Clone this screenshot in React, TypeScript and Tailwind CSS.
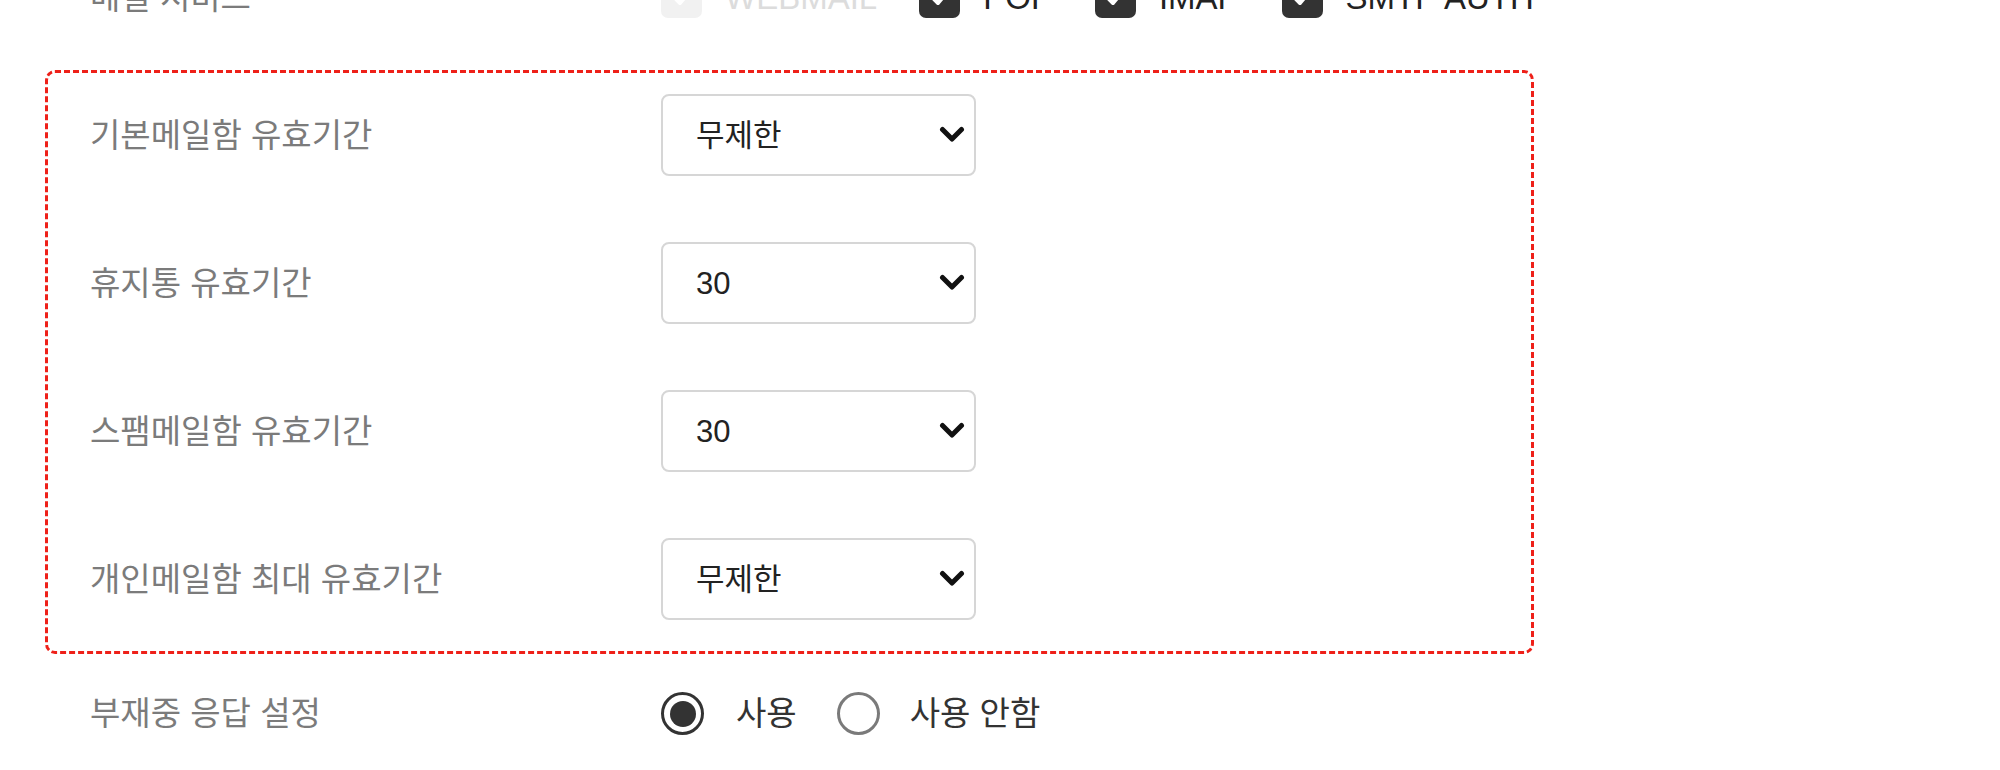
import React from "react";

const labelCls =
  "w-[571px] shrink-0 text-[33px] leading-none text-[#7b7b7b] font-['Liberation_Sans','Noto_Sans_CJK_KR',sans-serif]";

function Check({ disabled }: { disabled?: boolean }) {
  return (
    <div
      className={
        "w-[41px] h-[41px] rounded-[7px] flex items-center justify-center shrink-0 " +
        (disabled ? "bg-[#f1f1f1]" : "bg-[#333333]")
      }
    >
      <svg width="26" height="26" viewBox="0 0 26 26">
        <path
          d="M5 13 L11 19 L21 7"
          fill="none"
          stroke="#ffffff"
          strokeWidth="4"
          strokeLinecap="round"
          strokeLinejoin="round"
        />
      </svg>
    </div>
  );
}

function CheckItem({ label, disabled }: { label: string; disabled?: boolean }) {
  return (
    <div className="flex items-center gap-[23px]">
      <Check disabled={disabled} />
      <span
        className={
          "text-[33px] leading-none " + (disabled ? "text-[#dcdcdc]" : "text-[#222222]")
        }
      >
        {label}
      </span>
    </div>
  );
}

function SelectBox({ value }: { value: string }) {
  return (
    <div className="w-[315px] h-[82px] rounded-[8px] border-2 border-[#d6d6d6] bg-white flex items-center justify-between pl-[33px] pr-[9px]">
      <span className="text-[31px] leading-none text-[#222222]">{value}</span>
      <svg width="26" height="18" viewBox="0 0 26 18">
        <path
          d="M3.5 3.5 L13 13 L22.5 3.5"
          fill="none"
          stroke="#111111"
          strokeWidth="5"
          strokeLinecap="round"
          strokeLinejoin="round"
        />
      </svg>
    </div>
  );
}

function SelectRow({ label, value }: { label: string; value: string }) {
  return (
    <div className="flex items-center h-[82px]">
      <div className={labelCls}>{label}</div>
      <SelectBox value={value} />
    </div>
  );
}

function Radio({ checked }: { checked?: boolean }) {
  return checked ? (
    <div className="w-[43px] h-[43px] rounded-full border-[3px] border-[#333333] flex items-center justify-center shrink-0">
      <div className="w-[26px] h-[26px] rounded-full bg-[#333333]" />
    </div>
  ) : (
    <div className="w-[43px] h-[43px] rounded-full border-[3px] border-[#7a7a7a] shrink-0" />
  );
}

export default function App() {
  return (
    <div className="w-[2000px] h-[770px] overflow-hidden bg-white font-['Liberation_Sans','Noto_Sans_CJK_KR',sans-serif]">
      <div className="mt-[-27px]">
        <div className="flex items-center h-[48px] pl-[90px]">
          <div className={labelCls}>메일 서비스</div>
          <div className="flex items-center gap-[42px]">
            <CheckItem label="WEBMAIL" disabled />
            <CheckItem label="POP" />
            <CheckItem label="IMAP" />
            <CheckItem label="SMTP AUTH" />
          </div>
        </div>

        <div className="ml-[45px] mt-[49px] w-[1489px] h-[584px] rounded-[10px] border-[3px] border-dashed border-[#ee2019] pl-[42px] pt-[21px] flex flex-col gap-[66px]">
          <SelectRow label="기본메일함 유효기간" value="무제한" />
          <SelectRow label="휴지통 유효기간" value="30" />
          <SelectRow label="스팸메일함 유효기간" value="30" />
          <SelectRow label="개인메일함 최대 유효기간" value="무제한" />
        </div>

        <div className="flex items-center h-[43px] mt-[38px] pl-[90px]">
          <div className={labelCls}>부재중 응답 설정</div>
          <div className="flex items-center">
            <Radio checked />
            <span className="ml-[32px] text-[33px] leading-none text-[#333333]">사용</span>
            <div className="ml-[40px]">
              <Radio />
            </div>
            <span className="ml-[30px] text-[33px] leading-none text-[#333333]">사용 안함</span>
          </div>
        </div>
      </div>
    </div>
  );
}
